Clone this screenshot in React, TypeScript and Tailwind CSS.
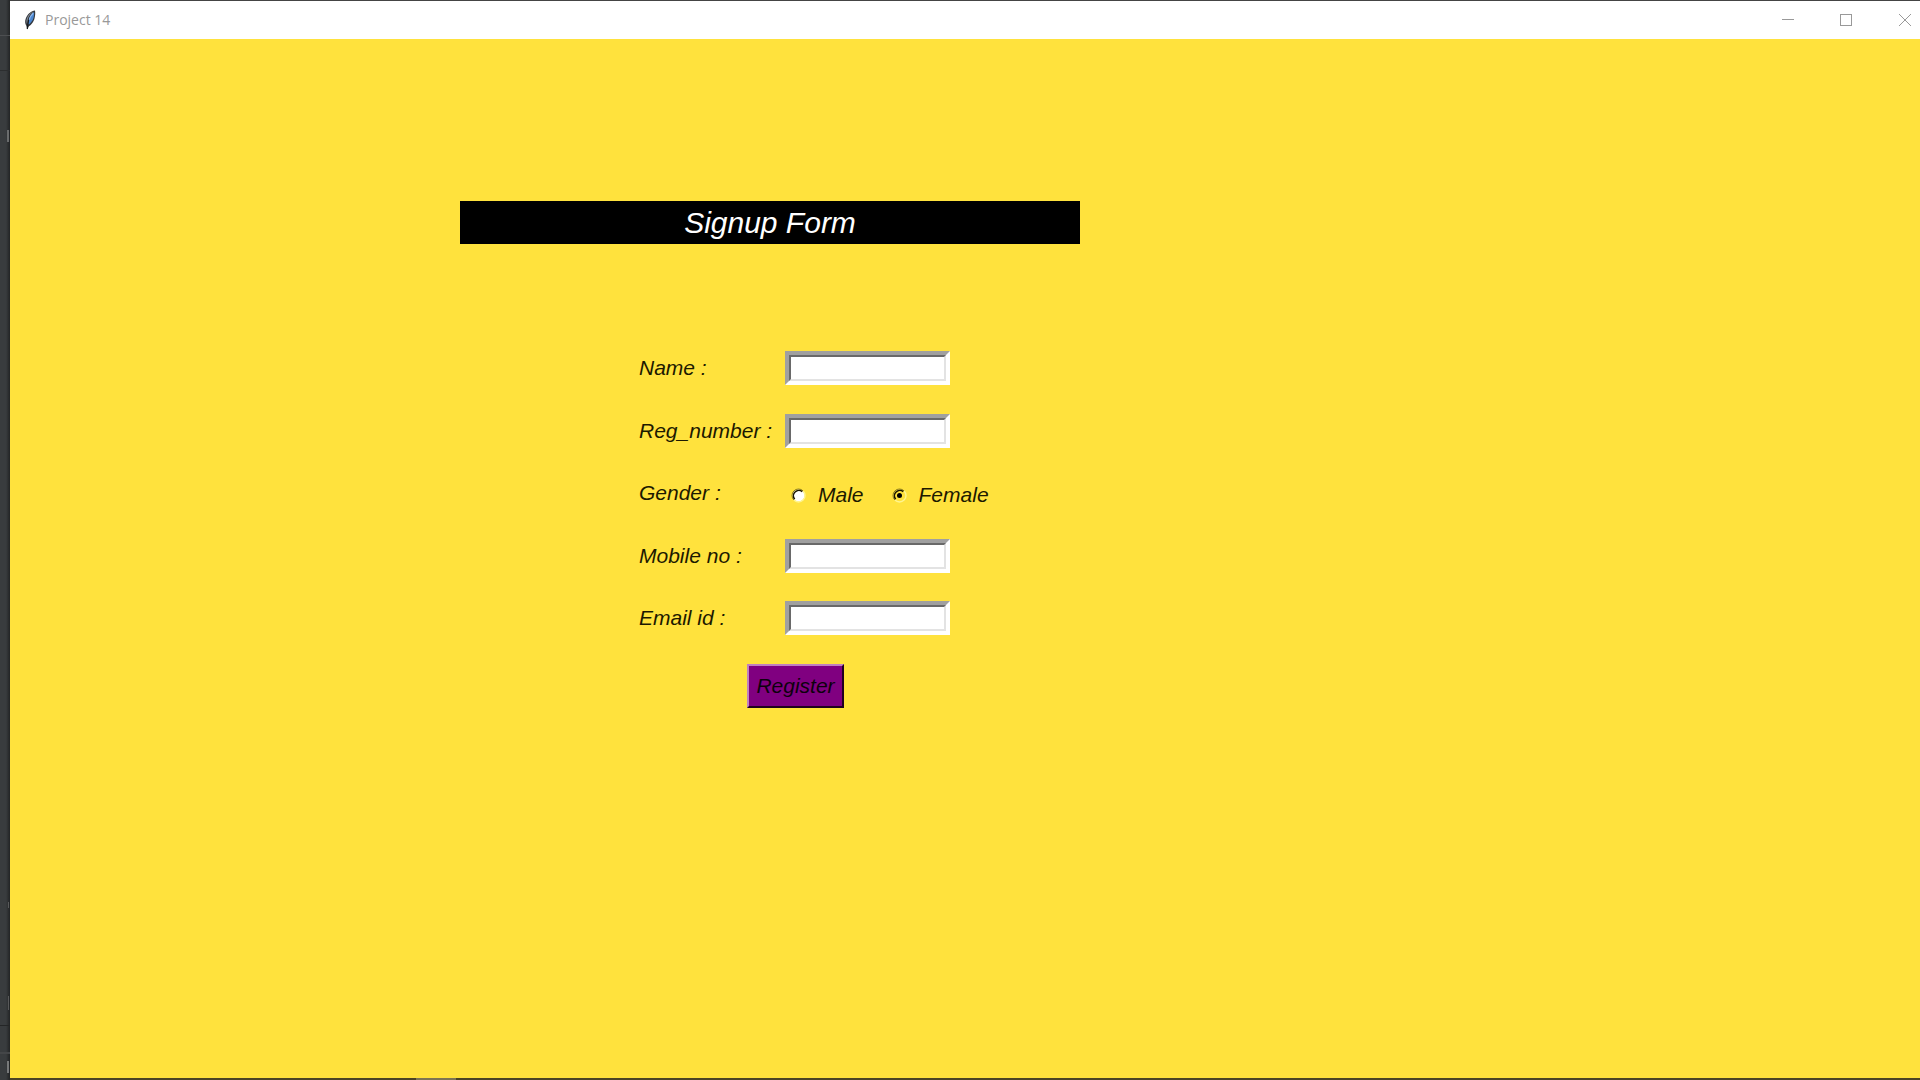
import { useState } from "react";

function Feather() {
  return (
    <svg className="h-5 w-3" viewBox="0 0 12 20" aria-hidden="true">
      <path d="M11 .5C7.500 .8 3.300 4 1.800 8.500 .8 11 .9 13.500 2.300 15.800L3.300 19.500 4.800 16.200C7.500 15.200 9.700 11.500 10.500 8.500 11.200 6 11.500 3 11 .5Z" fill="#33373d" />
      <path d="M9.800 1.800C7.200 3 4.800 5.800 3.900 8.500L3.100 14.300C2 12.200 2.300 9.200 3.600 6.800 5.200 4 7.500 2.300 9.800 1.800Z" fill="#8a9099" />
      <path d="M10 1.900C10.500 6.500 8.800 12.200 4.200 14.600 3.600 10.200 6.200 4.800 10 1.900Z" fill="#4a86d0" />
      <path d="M9.200 3.200C7.200 5 5.800 7.200 5.200 9.800" fill="none" stroke="#8fbaf0" strokeWidth="1.200" />
      <path d="M4.600 9.500L3.300 19" fill="none" stroke="#15181d" strokeWidth="1.200" />
    </svg>
  );
}

function TitleBar() {
  return (
    <header className="flex h-[38px] shrink-0 items-center bg-white pl-[14px] text-[#999999]">
      <Feather />
      <h1 className="ml-[9px] flex-1 font-['Open_Sans',sans-serif] text-[14px] leading-5">Project 14</h1>
      <button type="button" aria-label="Minimize" className="flex h-full w-[58px] items-center justify-center">
        <svg className="size-3" viewBox="0 0 12 12" stroke="currentColor" shapeRendering="crispEdges">
          <path d="M0 5.500H12" />
        </svg>
      </button>
      <button type="button" aria-label="Maximize" className="flex h-full w-[58px] items-center justify-center">
        <svg className="size-3" viewBox="0 0 12 12" fill="none" stroke="currentColor" shapeRendering="crispEdges">
          <path d="M.5 .5H11.500V11.500H.5Z" />
        </svg>
      </button>
      <button type="button" aria-label="Close" className="flex h-full w-[45px] items-center justify-end pr-[9px]">
        <svg className="size-3" viewBox="0 0 12 12" stroke="currentColor">
          <path d="M0 0L12 12M12 0L0 12" />
        </svg>
      </button>
    </header>
  );
}

function SunkenInput({ id, type = "text" }: { id: string; type?: string }) {
  return (
    <div className="h-[34px] w-[165px] border-4 border-t-[#a0a0a0] border-r-white border-b-white border-l-[#a0a0a0]">
      <input
        id={id}
        type={type}
        className="block h-full w-full border-2 border-t-[#696969] border-r-[#e3e3e3] border-b-[#e3e3e3] border-l-[#696969] bg-white px-1 text-[18px] outline-none"
      />
    </div>
  );
}

function Field({ id, label, type }: { id: string; label: string; type?: string }) {
  return (
    <>
      <label htmlFor={id}>{label}</label>
      <SunkenInput id={id} type={type} />
    </>
  );
}

function Radio({ label, checked, onSelect }: { label: string; checked: boolean; onSelect: () => void }) {
  return (
    <label className="flex items-center gap-3">
      <span className="relative block size-[15px]">
        <input type="radio" name="gender" value={label} checked={checked} onChange={onSelect} className="block size-full appearance-none rounded-full" />
        <svg className="pointer-events-none absolute inset-0 size-full" viewBox="0 0 15 15" fill="none">
          <circle cx="7.500" cy="7.500" r="6" fill={checked ? "#ffe23d" : "#ffffff"} />
          <path d="M2.900 12.100A6.500 6.500 0 0 1 12.100 2.900" stroke="#8f7f20" />
          <path d="M3.700 11.300A5.400 5.400 0 0 1 11.300 3.700" stroke="#1a1600" strokeWidth="1.500" />
          <path d="M12.100 2.900A6.500 6.500 0 0 1 2.900 12.100" stroke="#fff58f" strokeWidth="1.400" />
          {checked && <circle cx="7.500" cy="7.500" r="2.500" fill="#000000" />}
        </svg>
      </span>
      {label}
    </label>
  );
}

export default function App() {
  const [gender, setGender] = useState("Female");
  return (
    <div className="flex min-h-screen">
      <div className="flex w-[10px] shrink-0 flex-col bg-linear-to-r from-[#393c3e] from-60% to-[#222425]">
        <div className="h-[36px] border-b border-[#4d4f51]" />
        <div className="h-[35px] border-b border-[#2c2e2f]" />
        <div className="mt-[59px] ml-[7px] h-3 w-0.5 bg-[#6a6c6d]" />
        <div className="mt-auto mb-[88px] ml-2 h-[6px] w-px bg-[#58595a]" />
        <div className="mb-[15px] ml-2 h-[14px] w-px bg-[#58595a]" />
        <div className="h-[27px] border-t border-[#242627]" />
        <div className="h-[28px] border-t-2 border-[#444648] pt-[7px] pl-[7px]">
          <div className="h-3 w-0.5 bg-[#77797a]" />
        </div>
      </div>
      <div className="flex min-w-0 flex-1 flex-col border-t border-[#444444]">
        <TitleBar />
        <main className="flex-1 bg-[#ffe23d] pt-[162px] pl-[450px] font-['Liberation_Sans',Arial,sans-serif] text-[21px] leading-[34px] text-[#1c1900] italic">
          <h2 className="flex h-[43px] w-[620px] items-center justify-center bg-black text-[30px] text-white">Signup Form</h2>
          <form className="mt-[107px] ml-[179px] w-[400px]" onSubmit={(e) => e.preventDefault()}>
            <div className="grid grid-cols-[146px_auto] grid-rows-[63px_62px_63px_62px_34px] items-start justify-start">
              <Field id="name" label="Name :" />
              <Field id="reg" label="Reg_number :" />
              <span id="gender-label">Gender :</span>
              <div role="radiogroup" aria-labelledby="gender-label" className="flex gap-7 pt-0.5 pl-1.5">
                <Radio label="Male" checked={gender === "Male"} onSelect={() => setGender("Male")} />
                <Radio label="Female" checked={gender === "Female"} onSelect={() => setGender("Female")} />
              </div>
              <Field id="mobile" label="Mobile no :" type="tel" />
              <Field id="email" label="Email id :" type="email" />
            </div>
            <button
              type="submit"
              className="mt-[29px] ml-[108px] flex h-11 w-[97px] items-center justify-center border-2 border-t-[#c080c0] border-r-[#200020] border-b-[#200020] border-l-[#c080c0] bg-[#800080] text-[#0d000d] italic"
            >
              Register
            </button>
          </form>
        </main>
        <div className="flex h-0.5 bg-[#4b4425]">
          <div className="ml-[406px] w-10 bg-[#7d7553]" />
        </div>
      </div>
    </div>
  );
}
